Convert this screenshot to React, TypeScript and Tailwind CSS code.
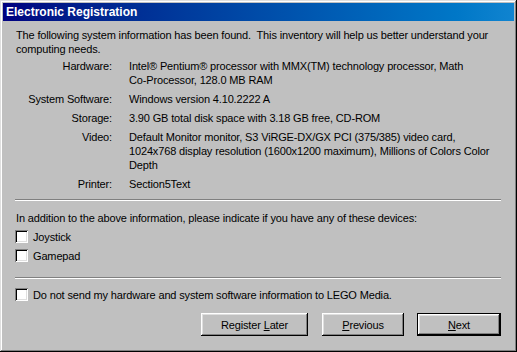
const rows: { label: string; lines: string[] }[] = [
  {
    label: "Hardware:",
    lines: [
      "Intel® Pentium® processor with MMX(TM) technology processor, Math",
      "Co-Processor, 128.0 MB RAM",
    ],
  },
  { label: "System Software:", lines: ["Windows version 4.10.2222 A"] },
  { label: "Storage:", lines: ["3.90 GB total disk space with 3.18 GB free, CD-ROM"] },
  {
    label: "Video:",
    lines: [
      "Default Monitor monitor, S3 ViRGE-DX/GX PCI (375/385) video card,",
      "1024x768 display resolution (1600x1200 maximum), Millions of Colors Color",
      "Depth",
    ],
  },
  { label: "Printer:", lines: ["Section5Text"] },
];

function Checkbox({ label }: { label: string }) {
  return (
    <label className="flex h-[19px] items-center">
      <span className="w-[13px] h-[13px] bg-white shadow-[inset_1px_1px_#808080,inset_-1px_-1px_#fff,inset_2px_2px_#000,inset_-2px_-2px_#dfdfdf]" />
      <span className="ml-[5px]">{label}</span>
    </label>
  );
}

function Separator() {
  return (
    <div className="h-[2px] border-t border-t-[#808080] border-b border-b-white" />
  );
}

function Button({
  children,
  width,
  isDefault = false,
}: {
  children: React.ReactNode;
  width: string;
  isDefault?: boolean;
}) {
  return (
    <button
      className={`${width} h-[23px] flex items-center justify-center bg-[#c0c0c0] ${
        isDefault
          ? "border border-black shadow-[inset_-1px_-1px_#000,inset_1px_1px_#fff,inset_-2px_-2px_#808080,inset_2px_2px_#dfdfdf]"
          : "shadow-[inset_-1px_-1px_#000,inset_1px_1px_#fff,inset_-2px_-2px_#808080,inset_2px_2px_#dfdfdf]"
      }`}
    >
      {children}
    </button>
  );
}

export default function App() {
  return (
    <div className="w-[517px] h-[352px] bg-[#c0c0c0] p-[3px] flex flex-col text-black text-[11px] tracking-[-0.15px] font-['Liberation_Sans',Arial,sans-serif] shadow-[inset_-1px_-1px_#000,inset_1px_1px_#dfdfdf,inset_-2px_-2px_#808080,inset_2px_2px_#fff]">
      {/* Title bar */}
      <div className="h-[18px] flex items-center pl-[3px] bg-gradient-to-r from-[#000080] to-[#1084d0] text-white font-bold text-[12px] tracking-normal">
        Electronic Registration
      </div>

      <div className="pl-[12px] pr-[13px] pt-[7px] leading-[14px] flex flex-col whitespace-nowrap">
        <p className="pl-[1px]">
          The following system information has been found.&nbsp; This inventory will help us better
          understand your
          <br />
          computing needs.
        </p>

        {/* System info */}
        <div className="mt-[3px] grid grid-cols-[97px_1fr] gap-x-[17px] gap-y-[5px]">
          {rows.map((r) => (
            <div key={r.label} className="contents">
              <div className="text-right">{r.label}</div>
              <div>
                {r.lines.map((l, i) => (
                  <div key={i}>{l}</div>
                ))}
              </div>
            </div>
          ))}
        </div>

        <div className="mt-[8px]">
          <Separator />
        </div>

        <p className="mt-[10px] pl-[1px]">
          In addition to the above information, please indicate if you have any of these devices:
        </p>
        <div className="mt-[2px]">
          <Checkbox label="Joystick" />
          <Checkbox label="Gamepad" />
        </div>

        <div className="mt-[12px]">
          <Separator />
        </div>

        <div className="mt-[6px]">
          <Checkbox label="Do not send my hardware and system software information to LEGO Media." />
        </div>

        {/* Buttons */}
        <div className="mt-[9px] flex justify-end">
          <Button width="w-[107px]">
            <span>
              Register <u>L</u>ater
            </span>
          </Button>
          <div className="ml-[14px]">
            <Button width="w-[82px]">
              <span>
                <u>P</u>revious
              </span>
            </Button>
          </div>
          <div className="ml-[13px]">
            <Button width="w-[84px]" isDefault>
              <span>
                <u>N</u>ext
              </span>
            </Button>
          </div>
        </div>
      </div>
    </div>
  );
}
